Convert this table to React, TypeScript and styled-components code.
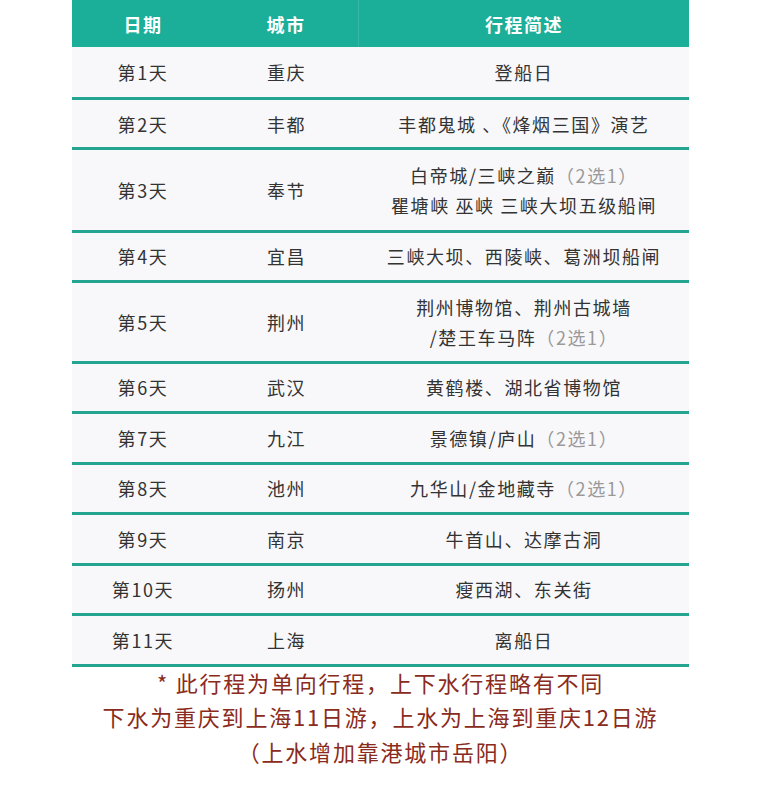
import React from "react";
import styled, { createGlobalStyle } from "styled-components";

const GlobalStyle = createGlobalStyle`
  html, body {
    margin: 0;
    padding: 0;
    background: #ffffff;
  }
  body {
    font-family: "Noto Sans CJK SC", "Noto Sans", sans-serif;
  }
`;

const Page = styled.div`
  width: 761px;
  min-height: 790px;
  display: flex;
  flex-direction: column;
  align-items: flex-start;
  padding-left: 72px;
  box-sizing: border-box;
`;

const Table = styled.div`
  width: 617px;
  display: flex;
  flex-direction: column;
`;

const HeaderRow = styled.div`
  display: grid;
  grid-template-columns: 142px 145px 330px;
  height: 47px;
  background: #1bae99;
  color: #ffffff;
  font-size: 18px;
  font-weight: 700;
  letter-spacing: 1.5px;
`;

const HeaderCell = styled.div<{ $divider?: boolean }>`
  display: flex;
  align-items: center;
  justify-content: center;
  border-right: ${(p) =>
    p.$divider ? "1px solid rgba(255, 255, 255, 0.12)" : "none"};
`;

const Row = styled.div<{ $height: number }>`
  display: grid;
  grid-template-columns: 142px 145px 330px;
  height: ${(p) => p.$height}px;
  background: #f8f8fa;
  border-bottom: 3px solid #24a591;
  color: #333333;
  font-size: 18px;
  letter-spacing: 1.6px;
`;

const Cell = styled.div`
  display: flex;
  flex-direction: column;
  align-items: center;
  justify-content: center;
  line-height: 30px;
  text-align: center;
  white-space: nowrap;
`;

const Note = styled.span`
  color: #9a9a9a;
`;

const Footer = styled.div`
  width: 617px;
  margin-top: -2px;
  display: flex;
  flex-direction: column;
  align-items: center;
  color: #8a2b20;
  font-size: 22px;
  line-height: 34.5px;
  letter-spacing: 1.8px;
`;

type Stop = {
  day: string;
  city: string;
  lines: React.ReactNode[];
  height: number;
};

const stops: Stop[] = [
  { day: "第1天", city: "重庆", lines: ["登船日"], height: 50 },
  { day: "第2天", city: "丰都", lines: ["丰都鬼城 、《烽烟三国》演艺"], height: 47 },
  {
    day: "第3天",
    city: "奉节",
    lines: [
      <>
        白帝城/三峡之巅<Note>（2选1）</Note>
      </>,
      "瞿塘峡 巫峡 三峡大坝五级船闸",
    ],
    height: 79.5,
  },
  { day: "第4天", city: "宜昌", lines: ["三峡大坝、西陵峡、葛洲坝船闸"], height: 47 },
  {
    day: "第5天",
    city: "荆州",
    lines: [
      "荆州博物馆、荆州古城墙",
      <>
        /楚王车马阵<Note>（2选1）</Note>
      </>,
    ],
    height: 78,
  },
  { day: "第6天", city: "武汉", lines: ["黄鹤楼、湖北省博物馆"], height: 47.5 },
  {
    day: "第7天",
    city: "九江",
    lines: [
      <>
        景德镇/庐山<Note>（2选1）</Note>
      </>,
    ],
    height: 47.5,
  },
  {
    day: "第8天",
    city: "池州",
    lines: [
      <>
        九华山/金地藏寺<Note>（2选1）</Note>
      </>,
    ],
    height: 47.5,
  },
  { day: "第9天", city: "南京", lines: ["牛首山、达摩古洞"], height: 47.5 },
  { day: "第10天", city: "扬州", lines: ["瘦西湖、东关街"], height: 47.5 },
  { day: "第11天", city: "上海", lines: ["离船日"], height: 47.5 },
];

export default function App() {
  return (
    <>
      <GlobalStyle />
      <Page>
        <Table>
          <HeaderRow>
            <HeaderCell>日期</HeaderCell>
            <HeaderCell $divider>城市</HeaderCell>
            <HeaderCell>行程简述</HeaderCell>
          </HeaderRow>
          {stops.map((s) => (
            <Row key={s.day} $height={s.height}>
              <Cell>{s.day}</Cell>
              <Cell>{s.city}</Cell>
              <Cell>
                {s.lines.map((line, i) => (
                  <div key={i}>{line}</div>
                ))}
              </Cell>
            </Row>
          ))}
        </Table>
        <Footer>
          <div>* 此行程为单向行程，上下水行程略有不同</div>
          <div>下水为重庆到上海11日游，上水为上海到重庆12日游</div>
          <div>（上水增加靠港城市岳阳）</div>
        </Footer>
      </Page>
    </>
  );
}
